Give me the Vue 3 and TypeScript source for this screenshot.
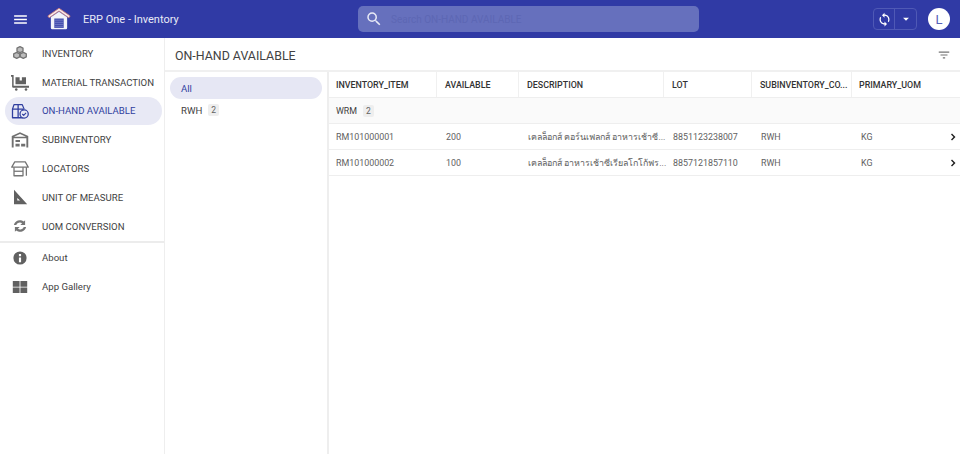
<script setup lang="ts">
interface NavItem { label: string; icon: string; box: string; active?: boolean }
const full = '0 0 24 24'
const small = '-3 -3 30 30'
const nav: NavItem[] = [
  { label: 'INVENTORY', icon: 'inventory', box: small },
  { label: 'MATERIAL TRANSACTION', icon: 'transaction', box: full },
  { label: 'ON-HAND AVAILABLE', icon: 'onhand', box: full, active: true },
  { label: 'SUBINVENTORY', icon: 'sub', box: full },
  { label: 'LOCATORS', icon: 'locators', box: full },
  { label: 'UNIT OF MEASURE', icon: 'unit', box: small },
  { label: 'UOM CONVERSION', icon: 'sync', box: small },
]
const columns = [
  { label: 'INVENTORY_ITEM', w: 108 },
  { label: 'AVAILABLE', w: 82 },
  { label: 'DESCRIPTION', w: 145 },
  { label: 'LOT', w: 88 },
  { label: 'SUBINVENTORY_CO...', w: 100 },
  { label: 'PRIMARY_UOM', w: 109 },
]
const rows = [
  ['RM101000001', '200', 'เคลล็อกส์ คอร์นเฟลกส์ อาหารเช้าซี...', '8851123238007', 'RWH', 'KG'],
  ['RM101000002', '100', 'เคลล็อกส์ อาหารเช้าซีเรียลโกโก้ฟร...', '8857121857110', 'RWH', 'KG'],
]
</script>

<template>
  <div class="app">
    <header class="topbar">
      <svg class="menu" viewBox="0 0 24 24" width="17" height="17"><path d="M3 18h18v-2H3v2zm0-5h18v-2H3v2zm0-7v2h18V6H3z" fill="#fff" /></svg>
      <svg class="logo" viewBox="0 0 28 26" width="24" height="23">
        <path d="M14 1 1 10l1.500 2.200L14 4.200l11.500 8L27 10z" fill="#f6e9e9" stroke="#c9787c" stroke-width="1" />
        <path d="M4.500 11.500 14 5l9.500 6.500V24a1.500 1.500 0 0 1-1.500 1.500H6A1.500 1.500 0 0 1 4.500 24z" fill="#f2f3fa" />
        <path d="M8.500 13h11v11h-11z" fill="#454fae" />
        <path d="M8.500 15h11M8.500 17.500h11M8.500 20h11M8.500 22.500h11" stroke="#838bd0" stroke-width=".7" />
      </svg>
      <span class="app-title">ERP One - Inventory</span>
      <div class="search">
        <svg viewBox="0 0 24 24" width="18" height="18"><path d="M15.500 14h-.79l-.28-.27A6.470 6.470 0 0 0 16 9.500 6.500 6.500 0 1 0 9.500 16c1.610 0 3.090-.59 4.230-1.570l.27.28v.79l5 4.990L20.490 19l-4.990-5zm-6 0C7.010 14 5 11.990 5 9.500S7.010 5 9.500 5 14 7.010 14 9.500 11.990 14 9.500 14z" fill="#e8eaf6" /></svg>
        <span class="placeholder">Search ON-HAND AVAILABLE</span>
      </div>
      <div class="split">
        <span class="split-a">
          <svg viewBox="0 0 24 24" width="15" height="15"><path d="M12 4V1L8 5l4 4V6c3.310 0 6 2.690 6 6 0 1.010-.25 1.970-.7 2.800l1.460 1.460A7.930 7.930 0 0 0 20 12c0-4.420-3.580-8-8-8zm0 14c-3.310 0-6-2.690-6-6 0-1.010.25-1.970.7-2.800L5.240 7.740A7.930 7.930 0 0 0 4 12c0 4.420 3.580 8 8 8v3l4-4-4-4v3z" fill="#fff" /></svg>
        </span>
        <span class="split-b">
          <svg viewBox="0 0 24 24" width="14" height="14"><path d="m7 10 5 5 5-5z" fill="#fff" /></svg>
        </span>
      </div>
      <div class="avatar">L</div>
    </header>

    <div class="body">
      <aside class="sidebar">
        <nav class="nav">
          <div v-for="item in nav" :key="item.label" class="nav-item" :class="{ active: item.active }">
            <svg class="nav-icon" :viewBox="item.box" width="18" height="18">
              <g v-if="item.icon === 'inventory'" fill="none" stroke="#757575" stroke-width="2.200" stroke-linejoin="round">
                <path d="M12 1.500l5 2.400v5.200L12 11.500 7 9.100V3.900z" fill="#bdbdbd" />
                <path d="M6.500 11 11.500 13.400v5.200L6.500 21 1.500 18.600v-5.200z" fill="#bdbdbd" />
                <path d="M17.500 11 22.500 13.400v5.200L17.500 21l-5-2.400v-5.200z" fill="#bdbdbd" />
              </g>
              <g v-else-if="item.icon === 'transaction'" fill="#616161">
                <path d="M0 2.500h3.500V17h20.500v2.500H2.500L1.500 18.500V5H0z" />
                <path d="M6 5.500h5.500V10h3V5.500H20V15H6z" />
                <circle cx="7" cy="22" r="1.700" /><circle cx="20" cy="22" r="1.700" />
              </g>
              <g v-else-if="item.icon === 'onhand'" fill="none" stroke="#303f9f" stroke-width="1.700" stroke-linejoin="round">
                <path d="M2 9.500h14V21H2z" /><path d="M2 9.500 4 3.500h11L17.500 9.500" /><path d="M9.500 3.500v6M9.500 9.500V21" />
                <circle cx="17.500" cy="16" r="5.500" fill="#e8e9f5" />
                <path d="m15 16 1.900 1.900 3.200-3.400" stroke-width="1.500" />
              </g>
              <g v-else-if="item.icon === 'sub'" fill="#707070">
                <path d="M12 1.500 1 6.500V22h2.500V9.500h17V22H23V6.500zM4 7.500 12 4l8 3.500z" />
                <path d="M6 12h6v2.500H6zM6 17h5.500v3.500H6zM13.500 17H19v3.500h-5.500z" />
              </g>
              <g v-else-if="item.icon === 'locators'" fill="none" stroke="#757575" stroke-width="1.700" stroke-linejoin="round">
                <path d="M5 2.500h14L23 9.500H1z" /><path d="M4 9.500V21h12V9.500M20.500 9.500V21" /><path d="M4 15h12" />
              </g>
              <g v-else-if="item.icon === 'unit'" fill="#616161">
                <path fill-rule="evenodd" d="M2 0l22 24H2zM7.500 13.500V18H12z" />
              </g>
              <path v-else d="M20.500 2.500v8h-8l3-3A6.500 6.500 0 0 0 5.700 10.500H1.800A10.300 10.300 0 0 1 18.300 4.700zM3.500 21.500v-8h8l-3 3a6.500 6.500 0 0 0 9.800-3h3.900a10.300 10.300 0 0 1-16.500 5.800z" fill="#757575" />
            </svg>
            <span>{{ item.label }}</span>
          </div>
        </nav>
        <div class="nav-sep"></div>
        <div class="nav-item">
          <svg class="nav-icon" :viewBox="small" width="18" height="18"><path d="M12 1a11 11 0 1 0 0 22 11 11 0 0 0 0-22zm1.800 18h-3.600v-8h3.600zm0-10h-3.600V5.500h3.600z" fill="#616161" /></svg>
          <span>About</span>
        </div>
        <div class="nav-item">
          <svg class="nav-icon" :viewBox="small" width="18" height="18"><path d="M0 2h11.300v9.500H0zM12.700 2H24v9.500H12.700zM0 12.800h11.300V22H0zM12.700 12.800H24V22H12.700z" fill="#616161" /></svg>
          <span>App Gallery</span>
        </div>
      </aside>

      <main class="main">
        <div class="title-row">
          <h1>ON-HAND AVAILABLE</h1>
          <svg viewBox="0 0 24 24" width="14" height="14"><path d="M10 18h4v-2h-4v2zM3 6v2h18V6H3zm3 7h12v-2H6v2z" fill="#757575" /></svg>
        </div>
        <div class="content">
          <div class="groups">
            <div class="group active">All</div>
            <div class="group">RWH <span class="count">2</span></div>
          </div>
          <div class="table">
            <div class="thead">
              <div v-for="c in columns" :key="c.label" class="th" :style="{ width: c.w + 'px' }">{{ c.label }}</div>
            </div>
            <div class="group-row">WRM <span class="count">2</span></div>
            <div v-for="r in rows" :key="r[0]" class="tr">
              <div v-for="(v, i) in r" :key="i" class="td" :style="{ width: columns[i].w + 'px' }">{{ v }}</div>
              <svg class="chev" viewBox="0 0 24 24" width="12" height="12"><path d="M8 17 13 12 8 7l2-2 7 7-7 7z" fill="#212121" /></svg>
            </div>
          </div>
        </div>
      </main>
    </div>
  </div>
</template>

<style scoped>
.app { width: 960px; height: 454px; overflow: hidden; display: flex; flex-direction: column; font-family: Roboto, "Noto Sans", "DejaVu Sans", sans-serif; color: #424242; background: #fff; }
.topbar { height: 38px; flex: none; background: #303aa5; display: flex; align-items: center; color: #fff; position: relative; }
.menu { margin-left: 12px; }
.logo { margin-left: 18px; margin-top: -1px; }
.app-title { margin-left: 12px; font-size: 11px; color: #e8eaf6; }
.search { position: absolute; left: 358px; top: 6px; width: 341px; height: 26px; border-radius: 5px; background: #6670bd; display: flex; align-items: center; padding-left: 7px; box-sizing: border-box; }
.placeholder { margin-left: 8px; font-size: 10px; color: #5d67b4; }
.split { margin-left: auto; display: flex; height: 22px; border: 1px solid #4f59b5; border-radius: 4px; box-sizing: border-box; }
.split-a { width: 20px; display: flex; align-items: center; justify-content: center; border-right: 1px solid #4f59b5; }
.split-b { width: 21px; display: flex; align-items: center; justify-content: center; }
.avatar { width: 22px; height: 22px; border-radius: 50%; background: #fff; color: #5560b8; font-size: 13px; display: flex; align-items: center; justify-content: center; margin: 0 10px 0 11px; }
.body { flex: 1; display: flex; min-height: 0; }
.sidebar { width: 165px; flex: none; border-right: 1px solid #eeeeee; box-sizing: border-box; padding-top: 1px; }
.nav-item { height: 28.800px; display: flex; align-items: center; font-size: 9.600px; color: #424242; margin-right: 2px; margin-left: 5px; border-radius: 15px; padding-left: 6px; white-space: nowrap; }
.nav-item.active { background: #e8e9f5; color: #303f9f; }
.nav-icon { margin-right: 13px; flex: none; }
.nav-sep { height: 2px; background: #ececec; margin-bottom: 1px; }
.main { flex: 1; min-width: 0; display: flex; flex-direction: column; }
.title-row { height: 34px; display: flex; align-items: center; justify-content: space-between; padding: 2px 9px 0 10px; border-bottom: 2px solid #f0f0f0; flex: none; box-sizing: border-box; }
h1 { margin: 0; font-size: 12.400px; font-weight: 400; color: #424242; }
.content { flex: 1; display: flex; min-height: 0; }
.groups { width: 164px; flex: none; border-right: 2px solid #eeeeee; padding: 5px 5px 0; box-sizing: border-box; }
.group { height: 22px; border-radius: 12px; padding-left: 11px; display: flex; align-items: center; font-size: 9.600px; color: #424242; }
.group.active { background: #e6e7f4; color: #303f9f; }
.count { background: #eeeeee; color: #616161; font-size: 8.500px; padding: 1px 3px; border-radius: 2px; margin-left: 6px; }
.table { flex: 1; min-width: 0; font-size: 8.900px; }
.thead { display: flex; height: 26px; border-bottom: 1px solid #eeeeee; box-sizing: border-box; }
.th { flex: none; border-right: 1px solid #f0f0f0; padding-left: 8px; box-sizing: border-box; display: flex; align-items: center; font-weight: 500; color: #333; white-space: nowrap; overflow: hidden; }
.th:first-child { padding-left: 7px; }
.th:last-child { border-right: 0; padding-left: 7px; }
.group-row { height: 26px; box-sizing: border-box; border-bottom: 1px solid #eeeeee; background: #fafafa; padding-left: 7px; display: flex; align-items: center; color: #424242; }
.tr { height: 26px; box-sizing: border-box; border-bottom: 1px solid #eeeeee; display: flex; align-items: center; position: relative; }
.td { flex: none; padding-left: 9px; box-sizing: border-box; white-space: nowrap; color: #616161; }
.td:first-child { padding-left: 7px; }
.chev { position: absolute; right: 1px; top: 7px; }
</style>
